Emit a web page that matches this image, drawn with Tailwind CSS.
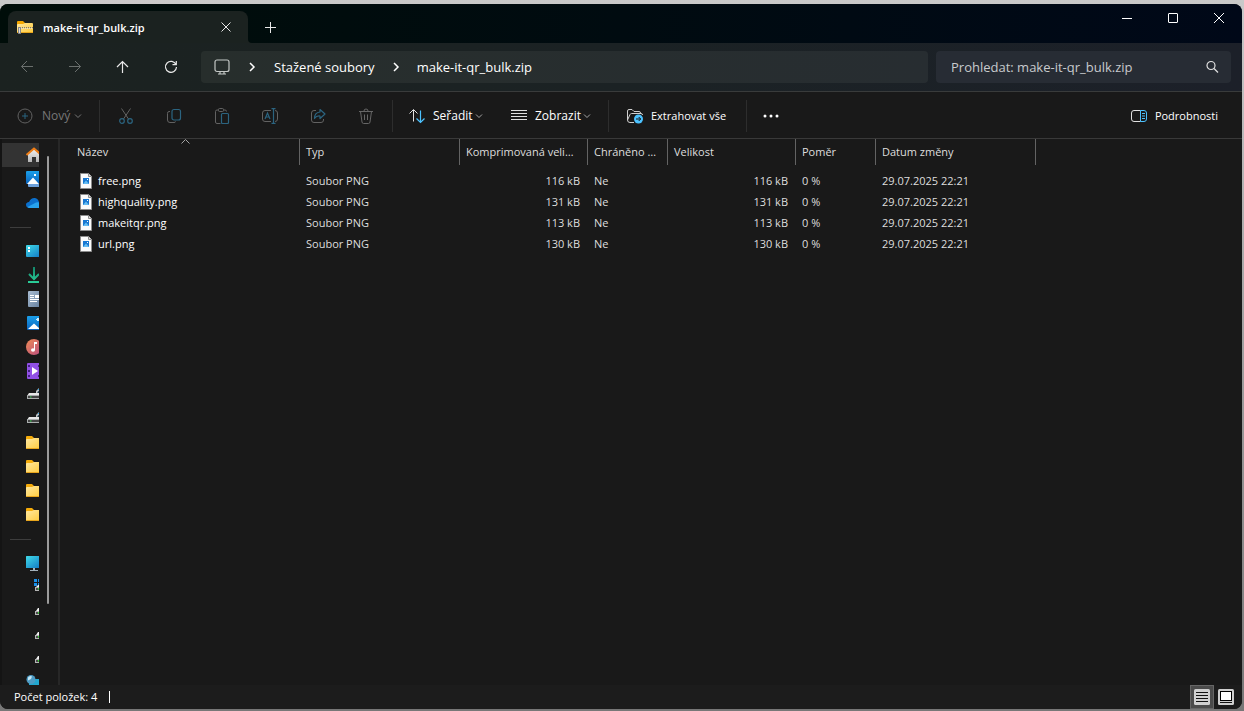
<!DOCTYPE html>
<html lang="cs">
<head>
    <meta charset="UTF-8">
    <meta name="viewport" content="width=device-width, initial-scale=1.0">
    <title>make-it-qr_bulk.zip</title>
    <script src="https://cdn.jsdelivr.net/npm/@tailwindcss/browser@4"></script>
    <style>
        body {
            font-family: 'Open Sans', 'Noto Sans', sans-serif;
        }
        svg {
            flex-shrink: 0;
        }
    </style>
</head>
<body class="h-screen overflow-hidden bg-linear-to-b from-[#c9c9c9] to-[#777777] pt-1 pb-0.5 pr-0.5">

<!-- Shared icon shapes -->
<svg class="absolute size-0" aria-hidden="true">
    <defs>
        <linearGradient id="g-folder" x1="0" y1="0" x2="1" y2="1"><stop offset="0" stop-color="#ffe9a2"/><stop offset="1" stop-color="#ffc936"/></linearGradient>
        <linearGradient id="g-blue" x1="0" y1="0" x2="0" y2="1"><stop offset="0" stop-color="#1ba0ea"/><stop offset="1" stop-color="#0a62bd"/></linearGradient>
        <linearGradient id="g-cyan" x1="0" y1="0" x2="1" y2="1"><stop offset="0" stop-color="#40dbe8"/><stop offset="1" stop-color="#0f74c4"/></linearGradient>
        <linearGradient id="g-doc" x1="0" y1="0" x2="1" y2="1"><stop offset="0" stop-color="#a9bdd2"/><stop offset="1" stop-color="#647f9f"/></linearGradient>
        <linearGradient id="g-music" x1="0" y1="0" x2="1" y2="1"><stop offset="0" stop-color="#ee8a55"/><stop offset="1" stop-color="#b84c80"/></linearGradient>
        <linearGradient id="g-home" x1="0" y1="0" x2="0" y2="1"><stop offset="0" stop-color="#f1f1f1"/><stop offset="1" stop-color="#b5b5b5"/></linearGradient>
        <linearGradient id="g-green" x1="0" y1="0" x2="0" y2="16" gradientUnits="userSpaceOnUse"><stop offset="0" stop-color="#12866a"/><stop offset="1" stop-color="#2bd09a"/></linearGradient>
    </defs>
    <symbol id="folder" viewBox="0 0 16 16">
        <path d="M0 2Q0 1 1 1H6L8 3H15V7H0Z" fill="#f5ab09"/>
        <path d="M0 5Q0 4 1 4H6L8 3H15Q16 3 16 4V13Q16 14 15 14H1Q0 14 0 13Z" fill="url(#g-folder)"/>
        <path d="M0 13H16Q16 14 15 14H1Q0 14 0 13Z" fill="#e8a51c"/>
    </symbol>
    <symbol id="drive" viewBox="0 0 16 16">
        <path d="M3 6H13L16 9H1Z" fill="#e8e8e8"/>
        <path d="M1 8H16V12H1Z" fill="#a9adad"/>
        <path d="M2 9H16V11H2Z" fill="#444"/>
        <path d="M4 9.500H5.500V10.500H4Z" fill="#35e052"/>
        <path d="M10 6V4L13 1L14 3L11.500 5V6Z" fill="#bfc5c9"/>
        <path d="M12 3L14 1M12.500 5H14" stroke="#34a8e8"/>
    </symbol>
    <symbol id="netdrive" viewBox="0 0 16 16">
        <path d="M10 8L12 5H16V8Z" fill="#f0f0f0"/>
        <path d="M9 8H16V12H9Z" fill="#b5b5b5"/>
        <path d="M10 9H16V11H10Z" fill="#494949"/>
        <path d="M12 9H13V10.500H12Z" fill="#30e830"/>
    </symbol>
    <symbol id="png" viewBox="0 0 12 16">
        <path d="M.5.500H8.500L11.500 3.500V15.500H.5Z" fill="#fbfbfb" stroke="#8c8c8c"/>
        <path d="M8.500.500V3.500H11.500" fill="#ddd" stroke="#8c8c8c"/>
        <path d="M3 5H9V11H3Z" fill="#1878d2"/>
        <path d="M3 11L6 7.500L9 11Z" fill="#65bdf2"/>
        <path d="M7 6H8V7H7Z" fill="#fff"/>
    </symbol>
    <symbol id="chev-down" viewBox="0 0 8 8">
        <path d="M1 2.500L4 5.500L7 2.500" fill="none" stroke="currentColor"/>
    </symbol>
    <symbol id="chev-right" viewBox="0 0 8 10">
        <path d="M2 1L6 5L2 9" fill="none" stroke="currentColor" stroke-width="1.500"/>
    </symbol>
</svg>

<div class="flex h-full flex-col overflow-hidden rounded-lg bg-[#191919] text-white">

    <!-- Title bar with tabs -->
    <header class="flex h-[39px] shrink-0 bg-linear-to-r from-[#000d09] via-[#000b10] to-[#000818] pl-2">
        <div class="relative mt-[7px] flex w-60 items-center rounded-t-lg bg-[#1b2220] pl-[9px] pr-3">
            <svg width="16" height="16" viewBox="0 0 16 16">
                <path d="M0 3Q0 2 1 2H6L8 4H15V8H0Z" fill="#f5a800"/>
                <path d="M0 6Q0 5 1 5H6L8 4H15Q16 4 16 5V13Q16 14 15 14H1Q0 14 0 13Z" fill="url(#g-folder)"/>
                <path d="M0 13H16V14H0Z" fill="#e8a51c"/>
                <path d="M1 8.500H16" stroke="#777" stroke-dasharray="1 1"/>
                <path d="M2 9.500H16" stroke="#ddd" stroke-dasharray="1 1"/>
                <path d="M1.500 8.500H3.500V14.500H1.500Z" fill="#ddd" stroke="#888"/>
            </svg>
            <span class="ml-[10px] flex-1 pt-0.5 text-[11px] font-semibold">make-it-qr_bulk.zip</span>
            <button aria-label="Zavřít kartu" class="flex size-5 items-center justify-center">
                <svg width="10" height="10" viewBox="0 0 10 10" fill="none" stroke="#e8e8e8"><path d="M.5.500L9.500 9.500M9.500.500L.5 9.500"/></svg>
            </button>
            <svg class="absolute -right-1 bottom-0" width="4" height="4" viewBox="0 0 4 4"><path d="M0 0Q0 4 4 4H0Z" fill="#1b2220"/></svg>
        </div>
        <button aria-label="Nová karta" class="ml-1.5 flex w-8 items-center justify-center pt-2">
            <svg width="11" height="11" viewBox="0 0 11 11" fill="none" stroke="#e8e8e8"><path d="M5.500 0V11M0 5.500H11"/></svg>
        </button>
        <div class="ml-auto flex h-7">
            <button aria-label="Minimalizovat" class="flex w-[46px] items-center justify-center"><svg width="10" height="10" viewBox="0 0 10 10"><path d="M0 5.500H10" stroke="#fff"/></svg></button>
            <button aria-label="Maximalizovat" class="flex w-[46px] items-center justify-center"><svg width="10" height="10" viewBox="0 0 10 10"><rect x=".5" y=".5" width="9" height="9" rx=".5" fill="none" stroke="#fff"/></svg></button>
            <button aria-label="Zavřít" class="flex w-[46px] items-center justify-center"><svg width="10" height="10" viewBox="0 0 10 10"><path d="M0 0L10 10M10 0L0 10" stroke="#fff"/></svg></button>
        </div>
    </header>

    <!-- Navigation bar -->
    <div class="flex h-[49px] shrink-0 items-center border-b border-[#393b3b] bg-linear-to-r from-[#1b2220] via-[#1b2224] to-[#1c2029] pl-[3px] pr-[11px]">
        <button disabled aria-label="Zpět" class="flex h-8 w-12 items-center justify-center text-[#6a6f6d]"><svg width="14" height="14" viewBox="0 0 14 14" fill="none" stroke="currentColor"><path d="M13 6.500H1.500M7 1L1.500 6.500L7 12"/></svg></button>
        <button disabled aria-label="Vpřed" class="flex h-8 w-12 items-center justify-center text-[#6a6f6d]"><svg width="14" height="14" viewBox="0 0 14 14" fill="none" stroke="currentColor"><path d="M1 6.500H12.500M7 1L12.500 6.500L7 12"/></svg></button>
        <button aria-label="Nahoru" class="flex h-8 w-12 items-center justify-center"><svg width="14" height="14" viewBox="0 0 14 14" fill="none" stroke="#e8e8e8" stroke-width="1.200"><path d="M6.500 13V1.500M1 7L6.500 1.500L12 7"/></svg></button>
        <button aria-label="Aktualizovat" class="flex h-8 w-12 items-center justify-center"><svg width="14" height="14" viewBox="0 0 14 14" fill="none" stroke="#e8e8e8" stroke-width="1.200"><path d="M12 4.500A5.500 5.500 0 1 0 12.500 7M12.300 1V4.700H8.500"/></svg></button>
        <nav aria-label="Cesta" class="ml-1.5 flex h-8 flex-1 items-center rounded bg-linear-to-r from-[#272e2c] to-[#272d31] pl-[13px] text-[13px]">
            <button aria-label="Tento počítač">
                <svg width="16" height="16" viewBox="0 0 16 16" fill="none" stroke="#c5c9c7" stroke-width="1.200"><rect x="1" y="1" width="14" height="11.500" rx="2"/><path d="M6 12.500V15M10 12.500V15M4 15H12"/></svg>
            </button>
            <svg class="ml-[18px]" width="8" height="10"><use href="#chev-right"/></svg>
            <a href="#" class="ml-[18px] pt-0.5">Stažené soubory</a>
            <svg class="ml-[17px]" width="8" height="10"><use href="#chev-right"/></svg>
            <a href="#" class="ml-[17px] pt-0.5">make-it-qr_bulk.zip</a>
        </nav>
        <div class="ml-2 flex h-8 w-[295px] items-center rounded bg-[#272c34] pl-[15px] pr-3">
            <input type="text" aria-label="Prohledat" placeholder="Prohledat: make-it-qr_bulk.zip" class="min-w-0 flex-1 bg-transparent pt-0.5 text-[13px] outline-none placeholder:text-[#c8cacd]">
            <svg width="14" height="14" viewBox="0 0 14 14" fill="none" stroke="#e0e0e0" stroke-width="1.200"><circle cx="6" cy="5.500" r="4"/><path d="M9 8.500L13 12.500"/></svg>
        </div>
    </div>

    <!-- Command bar -->
    <div class="flex h-[47px] shrink-0 items-center border-b border-[#393939] pt-0.5 text-[11px]">
        <button disabled class="flex h-8 w-[99px] items-center pl-[17px] text-[#777777]">
            <svg width="16" height="16" viewBox="0 0 16 16" fill="none" stroke="#626262"><circle cx="8" cy="8" r="7"/><path d="M8 5V11M5 8H11" stroke="#2b6480"/></svg>
            <span class="ml-[9px] text-[12px]">Nový</span>
            <svg class="ml-1" width="8" height="8"><use href="#chev-down"/></svg>
        </button>
        <span class="mr-0.5 h-8 w-px bg-[#2d2d2d]"></span>
        <button disabled aria-label="Vyjmout" class="flex h-8 w-12 items-center justify-center"><svg width="16" height="16" viewBox="0 0 16 16" fill="none" stroke="#626262"><path d="M3.500.500L10.500 11M12.500.500L5.500 11"/><g stroke="#2b6480" stroke-width="1.200"><circle cx="4" cy="13" r="2.300"/><circle cx="12" cy="13" r="2.300"/></g></svg></button>
        <button disabled aria-label="Kopírovat" class="flex h-8 w-12 items-center justify-center"><svg width="16" height="16" viewBox="0 0 16 16" fill="none" stroke="#626262"><path d="M4 3.500H3Q1.500 3.500 1.500 5.500V12Q1.500 14.500 4 14.500H8Q9.500 14.500 9.500 13.500"/><rect x="6" y="1.500" width="8.500" height="10.500" rx="2" stroke="#2b6480" stroke-width="1.200"/></svg></button>
        <button disabled aria-label="Vložit" class="flex h-8 w-12 items-center justify-center"><svg width="16" height="16" viewBox="0 0 16 16" fill="none" stroke="#626262"><path d="M6.500 15.500H3Q1.500 15.500 1.500 14V3.500Q1.500 2 3 2H4.500M9.500 2H11Q12.500 2 12.500 3.500"/><rect x="4.500" y=".5" width="5" height="3" rx="1"/><rect x="7.500" y="5.500" width="7" height="10" rx="1" stroke="#2b6480" stroke-width="1.200"/></svg></button>
        <button disabled aria-label="Přejmenovat" class="flex h-8 w-12 items-center justify-center"><svg width="16" height="16" viewBox="0 0 16 16" fill="none" stroke="#626262"><path d="M9 2.500H3Q.5 2.500.5 5V11Q.5 13.500 3 13.500H9M13 2.500Q15.500 2.500 15.500 5V11Q15.500 13.500 13 13.500"/><g stroke="#2b6480" stroke-width="1.200"><path d="M3 11L5.500 5L8 11M4 9H7M11.500 1V15M9.500.600H13.500M9.500 15.400H13.500"/></g></svg></button>
        <button disabled aria-label="Sdílet" class="flex h-8 w-12 items-center justify-center"><svg width="16" height="16" viewBox="0 0 16 16" fill="none" stroke="#626262"><path d="M6 2.500H4Q1.500 2.500 1.500 5V12Q1.500 14.500 4 14.500H11Q13.500 14.500 13.500 12V11"/><path d="M10 1.500L15 6L10 10.500V8Q6.500 7.500 4.500 10.500Q4.500 4.500 10 4Z" stroke="#2b6480" stroke-width="1.200" stroke-linejoin="round"/></svg></button>
        <button disabled aria-label="Odstranit" class="flex h-8 w-12 items-center justify-center"><svg width="16" height="16" viewBox="0 0 16 16" fill="none" stroke="#666666"><path d="M1 3.500H15M6 3Q6 1 8 1Q10 1 10 3M2.500 3.500L4 14Q4.200 15.500 5.500 15.500H10.500Q11.800 15.500 12 14L13.500 3.500M6.500 6.500V12M9.500 6.500V12"/></svg></button>
        <span class="ml-0.5 h-8 w-px bg-[#2d2d2d]"></span>
        <button class="flex h-8 w-[102px] items-center pl-4">
            <svg width="16" height="16" viewBox="0 0 16 16" fill="none" stroke="#e0e0e0"><path d="M4.500 13.500V2M.5 5.500L4.500 1.500L8.500 5.500"/><path d="M11.500 2.500V14M7.500 10.500L11.500 14.500L15.500 10.500" stroke="#4cc2ff" stroke-width="1.200"/></svg>
            <span class="ml-2 text-[12px]">Seřadit</span>
            <svg class="ml-0.5 text-[#a5a5a5]" width="8" height="8"><use href="#chev-down"/></svg>
        </button>
        <button class="flex h-8 w-[113px] items-center pl-4">
            <svg width="16" height="16" viewBox="0 0 16 16" fill="none" stroke="#e0e0e0"><path d="M0 2.500H16M0 5.500H16M0 8.500H16M0 11.500H16"/></svg>
            <span class="ml-2 text-[12px]">Zobrazit</span>
            <svg class="ml-0.5 text-[#a5a5a5]" width="8" height="8"><use href="#chev-down"/></svg>
        </button>
        <span class="h-8 w-px bg-[#2d2d2d]"></span>
        <button class="flex h-8 w-[137px] items-center pl-[18px]">
            <svg width="16" height="16" viewBox="0 0 16 16" fill="none" stroke="#d0d0d0"><path d="M7 14.500H3Q.5 14.500.5 12V3Q.5 1.500 2 1.500H5L7 3.500H12Q13.500 3.500 13.500 5M.5 12L3 6.500Q3.500 5.500 4.500 5.500H14Q15.500 5.500 15.500 7"/><circle cx="11.500" cy="11" r="4.500" fill="#4cc2ff" stroke="none"/><path d="M9 11H13.500M11.700 9L13.700 11L11.700 13" stroke="#111"/></svg>
            <span class="ml-2">Extrahovat vše</span>
        </button>
        <span class="h-8 w-px bg-[#2d2d2d]"></span>
        <button aria-label="Další možnosti" class="ml-4 flex h-8 items-center"><svg width="16" height="16" viewBox="0 0 16 16" fill="#fff"><circle cx="2" cy="8" r="1.500"/><circle cx="8" cy="8" r="1.500"/><circle cx="14" cy="8" r="1.500"/></svg></button>
        <button class="ml-auto mr-6 flex h-8 items-center">
            <svg width="16" height="16" viewBox="0 0 16 16" fill="none" stroke="#e0e0e0"><path d="M9.500 2.500H3Q.5 2.500.5 5V11Q.5 13.500 3 13.500H9.500"/><path d="M9.500 2.500H13Q15.500 2.500 15.500 5V11Q15.500 13.500 13 13.500H9.500ZM11 5.500H14M11 8H14M11 10.500H14" stroke="#4cc2ff"/></svg>
            <span class="ml-2">Podrobnosti</span>
        </button>
    </div>

    <div class="flex min-h-0 flex-1">
        <!-- Collapsed navigation pane -->
        <aside class="flex w-[60px] shrink-0 overflow-hidden border-l-2 border-r-2 border-l-[#141414] border-r-[#272727]">
            <ul class="w-[37px] overflow-hidden pt-1">
                <li class="flex h-6 items-center bg-[#333333] pl-6"><svg width="16" height="16" viewBox="0 0 16 16"><path d="M2 7L8 2L14 7V15H10V10H6V15H2Z" fill="url(#g-home)"/><path d="M.5 8L8 1.500L15.500 8" fill="none" stroke="#ee7d16" stroke-width="2"/></svg></li>
                <li class="flex h-6 items-center pl-6"><svg width="16" height="16" viewBox="0 0 16 16"><path d="M2 13H15V16H3Q2 16 2 15Z" fill="#6da1dc"/><rect width="16" height="13" y="0" rx="1" fill="url(#g-blue)"/><path d="M1 13L7 6.500L13 13Z" fill="#fff"/><path d="M8 3H10V5H8Z" fill="#fff"/></svg></li>
                <li class="flex h-6 items-center pl-6"><svg width="16" height="16" viewBox="0 0 16 16"><path d="M3 7Q5 2.500 9 3Q12 3.500 13 7L16 9V13H3Q0 12.500 0 9.500Q0 7.500 3 7Z" fill="#0b6fcc"/><path d="M1.500 12L10 7.500Q13 6.500 16 9V13H3.500Q2 13 1.500 12Z" fill="#27a2ee"/></svg></li>
                <li class="flex h-6 items-center pl-2"><span class="h-px w-[21px] bg-[#3d3d3d]"></span></li>
                <li class="flex h-6 items-center pl-6"><svg width="16" height="16" viewBox="0 0 16 16"><rect y="2" width="16" height="12" rx="1" fill="url(#g-cyan)"/><path d="M2 4H4V6H2ZM2 7H4V9H2Z" fill="#fff"/></svg></li>
                <li class="flex h-6 items-center pl-6"><svg width="16" height="16" viewBox="0 0 16 16" fill="none" stroke="url(#g-green)" stroke-width="2"><path d="M3 7L8 12L13 7"/><path d="M7 0H9V12H7ZM2 14H15V16H2Z" fill="url(#g-green)" stroke="none"/></svg></li>
                <li class="flex h-6 items-center pl-6"><svg width="16" height="16" viewBox="0 0 16 16"><rect x="2" width="13" height="16" rx="1" fill="url(#g-doc)"/><path d="M4 4.500H8M4 6.500H8M4 8.500H13M4 10.500H11" stroke="#fff"/><path d="M9 4H13V7H9Z" fill="#fff"/></svg></li>
                <li class="flex h-6 items-center pl-6"><svg width="16" height="16" viewBox="0 0 16 16"><rect x="1" y="1" width="15" height="14" rx="1" fill="url(#g-blue)"/><path d="M2 14L8 8.500L14 14Z" fill="#fff"/><path d="M11 3H13V6H11ZM10 4H14V5H10Z" fill="#cdeeff"/></svg></li>
                <li class="flex h-6 items-center pl-6"><svg width="16" height="16" viewBox="0 0 16 16"><circle cx="8" cy="8" r="8" fill="url(#g-music)"/><ellipse cx="7" cy="11" rx="2" ry="1.800" fill="#fff"/><path d="M8 11V3H11V5H9V11Z" fill="#fff"/></svg></li>
                <li class="flex h-6 items-center pl-6"><svg width="16" height="16" viewBox="0 0 16 16"><rect x="1" width="15" height="16" rx="1" fill="#9150e5"/><path d="M2 2H4V4H2ZM2 7H4V9H2ZM2 12H4V14H2ZM12 2H14V4H12ZM12 12H14V14H12Z" fill="#42207f"/><path d="M6 4V12L12 8Z" fill="#fff"/></svg></li>
                <li class="flex h-6 items-center pl-6"><svg width="16" height="16"><use href="#drive"/></svg></li>
                <li class="flex h-6 items-center pl-6"><svg width="16" height="16"><use href="#drive"/></svg></li>
                <li class="flex h-6 items-center pl-6"><svg width="16" height="16"><use href="#folder"/></svg></li>
                <li class="flex h-6 items-center pl-6"><svg width="16" height="16"><use href="#folder"/></svg></li>
                <li class="flex h-6 items-center pl-6"><svg width="16" height="16"><use href="#folder"/></svg></li>
                <li class="flex h-6 items-center pl-6"><svg width="16" height="16"><use href="#folder"/></svg></li>
                <li class="flex h-6 items-center pl-2"><span class="h-px w-[21px] bg-[#3d3d3d]"></span></li>
                <li class="flex h-6 items-center pl-6"><svg width="16" height="16" viewBox="0 0 16 16"><rect y="1" width="16" height="12" rx=".5" fill="url(#g-cyan)"/><path d="M7 13H9V15H12V16H4V15H7Z" fill="#a5b2bc"/></svg></li>
                <li class="flex h-6 items-center pl-6"><svg width="16" height="16" viewBox="0 0 16 16"><path d="M8 0H11V3H8ZM12 0H15V3H12ZM8 4H11V7H8ZM12 4H15V7H12Z" fill="#1a91e8"/><path d="M10 8L12 6H16V8Z" fill="#f0f0f0"/><path d="M9 8H16V12H9Z" fill="#b5b5b5"/><path d="M10 9H16V11H10Z" fill="#494949"/><path d="M12 9H13V10.500H12Z" fill="#30e830"/></svg></li>
                <li class="flex h-6 items-center pl-6"><svg width="16" height="16"><use href="#netdrive"/></svg></li>
                <li class="flex h-6 items-center pl-6"><svg width="16" height="16"><use href="#netdrive"/></svg></li>
                <li class="flex h-6 items-center pl-6"><svg width="16" height="16"><use href="#netdrive"/></svg></li>
                <li class="flex h-6 items-center pl-6"><svg width="16" height="16" viewBox="0 0 16 16"><path d="M3 4H16V15H3Z" fill="#22a7cf"/><circle cx="5" cy="4.500" r="4.500" fill="#4e9cc5"/><path d="M2 2.500Q4 0 6 1.500L5 4L2 5.500Z" fill="#c4e7f5"/></svg></li>
            </ul>
            <span class="ml-2 mt-[17px] h-[448px] w-0.5 rounded-full bg-[#9b9b9b]"></span>
        </aside>

        <!-- File list -->
        <main class="min-w-0 flex-1 overflow-hidden">
            <table class="w-[976px] table-fixed border-separate border-spacing-0 text-left text-[11px] leading-4 text-[#dedede]">
                <colgroup>
                    <col class="w-60"><col class="w-40"><col class="w-32"><col class="w-20"><col class="w-32"><col class="w-20"><col class="w-40">
                </colgroup>
                <thead>
                    <tr class="h-[26px]">
                        <th scope="col" aria-sort="ascending" class="relative border-r border-[#636363] pl-[17px] font-normal">
                            Název
                            <svg class="absolute left-[121px] top-0" width="9" height="5" viewBox="0 0 9 5" fill="none" stroke="#a5a5a5"><path d="M.5 4.500L4.500.500L8.500 4.500"/></svg>
                        </th>
                        <th scope="col" class="border-r border-[#636363] pl-1.5 font-normal">Typ</th>
                        <th scope="col" class="truncate border-r border-[#636363] pl-1.5 pr-2 font-normal">Komprimovaná velikost</th>
                        <th scope="col" class="truncate border-r border-[#636363] pl-1.5 pr-2 font-normal">Chráněno heslem</th>
                        <th scope="col" class="border-r border-[#636363] pl-1.5 font-normal">Velikost</th>
                        <th scope="col" class="border-r border-[#636363] pl-1.5 font-normal">Poměr</th>
                        <th scope="col" class="border-r border-[#636363] pl-1.5 font-normal">Datum změny</th>
                    </tr>
                </thead>
                <tbody class="before:block before:h-[5px] before:content-['']">
                    <tr class="h-[21px]">
                        <td class="pl-5 text-white"><div class="flex items-center gap-1.5"><svg width="12" height="16"><use href="#png"/></svg>free.png</div></td>
                        <td class="pl-1.5">Soubor PNG</td><td class="pr-2 text-right">116 kB</td><td class="pl-1.5">Ne</td><td class="pr-2 text-right">116 kB</td><td class="pl-1.5">0 %</td><td class="pl-1.5">29.07.2025 22:21</td>
                    </tr>
                    <tr class="h-[21px]">
                        <td class="pl-5 text-white"><div class="flex items-center gap-1.5"><svg width="12" height="16"><use href="#png"/></svg>highquality.png</div></td>
                        <td class="pl-1.5">Soubor PNG</td><td class="pr-2 text-right">131 kB</td><td class="pl-1.5">Ne</td><td class="pr-2 text-right">131 kB</td><td class="pl-1.5">0 %</td><td class="pl-1.5">29.07.2025 22:21</td>
                    </tr>
                    <tr class="h-[21px]">
                        <td class="pl-5 text-white"><div class="flex items-center gap-1.5"><svg width="12" height="16"><use href="#png"/></svg>makeitqr.png</div></td>
                        <td class="pl-1.5">Soubor PNG</td><td class="pr-2 text-right">113 kB</td><td class="pl-1.5">Ne</td><td class="pr-2 text-right">113 kB</td><td class="pl-1.5">0 %</td><td class="pl-1.5">29.07.2025 22:21</td>
                    </tr>
                    <tr class="h-[21px]">
                        <td class="pl-5 text-white"><div class="flex items-center gap-1.5"><svg width="12" height="16"><use href="#png"/></svg>url.png</div></td>
                        <td class="pl-1.5">Soubor PNG</td><td class="pr-2 text-right">130 kB</td><td class="pl-1.5">Ne</td><td class="pr-2 text-right">130 kB</td><td class="pl-1.5">0 %</td><td class="pl-1.5">29.07.2025 22:21</td>
                    </tr>
                </tbody>
            </table>
        </main>
    </div>

    <!-- Status bar -->
    <footer class="flex h-6 shrink-0 items-center bg-[#1c1c1c] pl-3.5 pr-1 text-[11px]">
        <span>Počet položek: 4</span>
        <span class="ml-3 h-3 w-px bg-white"></span>
        <button aria-label="Podrobnosti" class="ml-auto flex size-6 items-center justify-center border border-[#666666] bg-[#4b4b4b]">
            <svg width="16" height="16" viewBox="0 0 16 16"><rect width="16" height="16" rx="1.500" fill="#cfcfcf"/><path d="M2 3.500H14M2 6.500H14M2 9.500H14M2 12.500H14" stroke="#111"/></svg>
        </button>
        <button aria-label="Velké ikony" class="flex size-6 items-center justify-center">
            <svg width="16" height="16" viewBox="0 0 16 16"><rect width="16" height="16" rx="1.500" fill="#cfcfcf"/><rect x="2.500" y="2.500" width="11" height="9" fill="#fff" stroke="#000"/><path d="M2 13.500H14" stroke="#111"/></svg>
        </button>
    </footer>
</div>

</body>
</html>
